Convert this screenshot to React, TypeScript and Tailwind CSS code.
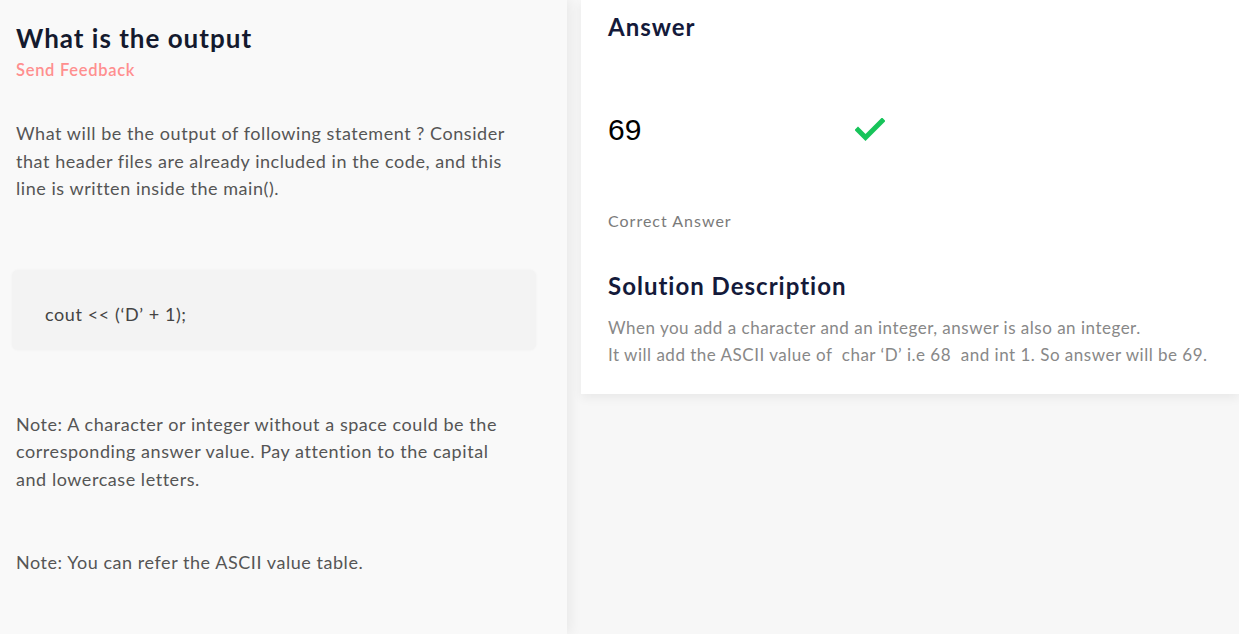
export default function App() {
  return (
    <div className="flex h-[634px] w-[1239px] overflow-hidden bg-[#f7f7f7] font-['Lato',sans-serif]">
      <div className="relative z-10 w-[567px] shrink-0 bg-[#f9f9f9] pl-4 pr-6 shadow-[4px_0_12px_rgba(0,0,0,0.06)]">
        <h1 className="mt-[22px] text-[26px] font-bold leading-8 tracking-[1px] text-[#141a2e]">What is the output</h1>
        <p className="mt-[4px] text-[16.5px] font-semibold leading-6 tracking-[0.7px] text-[#ff8f8f]">Send Feedback</p>
        <p className="mt-[38px] w-[515px] text-[18px] leading-[27.5px] tracking-[0.55px] text-[#555]">
          What will be the output of following statement ? Consider that header files are already included in the code, and this line is written inside the main().
        </p>
        <div className="-ml-1 mt-[67px] flex h-[80px] w-[524px] items-center rounded-md bg-[#f3f3f3] pl-[33px] pt-[10px] shadow-[0_0_3px_rgba(0,0,0,0.04)]">
          <span className="text-[18px] tracking-[0.6px] text-[#444]">cout &lt;&lt; (‘D’ + 1);</span>
        </div>
        <p className="mt-[61px] w-[502px] text-[18px] leading-[27.5px] tracking-[0.55px] text-[#555]">
          Note: A character or integer without a space could be the corresponding answer value. Pay attention to the capital and lowercase letters.
        </p>
        <p className="mt-[56px] text-[18px] leading-[27.5px] tracking-[0.55px] text-[#555]">Note: You can refer the ASCII value table.</p>
      </div>
      <div className="flex-1 pl-[14px]">
        <div className="h-[394px] bg-white pl-[27px] shadow-[0_4px_10px_rgba(0,0,0,0.06)]">
          <h2 className="pt-[11px] text-[24px] font-bold leading-8 tracking-[1px] text-[#141a3a]">Answer</h2>
          <div className="mt-[69px] flex h-9 items-center">
            <span className="w-[247px] font-['Liberation_Sans',sans-serif] text-[30px] leading-9 text-black">69</span>
            <svg width="30" height="24" viewBox="0 0 30 24">
              <path d="M3 12 L10.5 19.5 L27 3" fill="none" stroke="#17c45a" strokeWidth="5" strokeLinecap="square" />
            </svg>
          </div>
          <p className="mt-[61px] text-[16px] leading-6 tracking-[1px] text-[#7a7a7a]">Correct Answer</p>
          <h2 className="mt-[37px] text-[24px] font-bold leading-8 tracking-[1px] text-[#141a3a]">Solution Description</h2>
          <p className="mt-[12px] text-[17px] leading-[27px] tracking-[0.5px] text-[#888]">
            When you add a character and an integer, answer is also an integer.
            <br />
            It will add the ASCII value of&nbsp; char ‘D’ i.e 68&nbsp; and int 1. So answer will be 69.
          </p>
        </div>
      </div>
    </div>
  );
}
